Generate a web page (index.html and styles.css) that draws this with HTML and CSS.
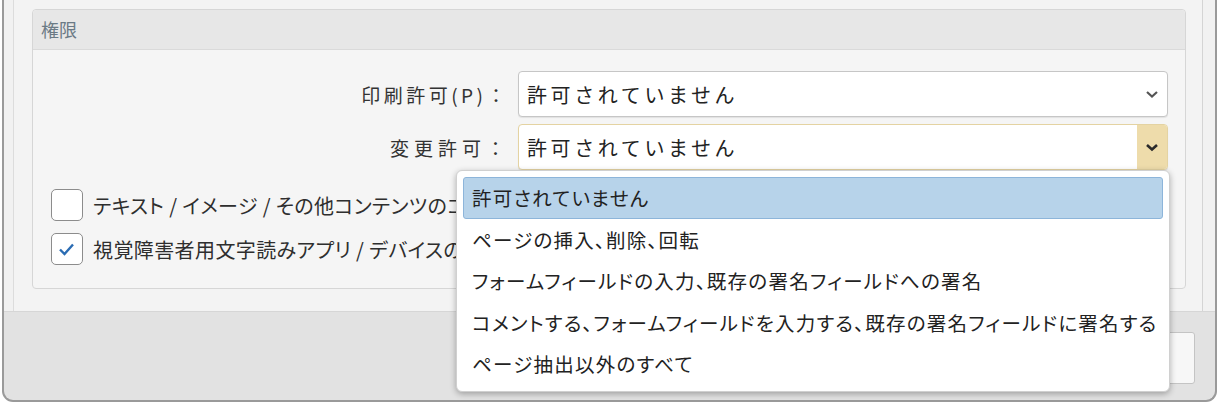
FILE: index.html
```html
<!DOCTYPE html>
<html lang="ja">
<head>
    <meta charset="UTF-8">
    <title>セキュリティ設定</title>
    <link rel="stylesheet" href="styles.css">
</head>
<body>

    <div class="ventana">
        <div class="principal">
            <div class="contenido">
                <div class="grupo">
                    <div class="grupo-titulo">権限</div>
                    <div class="grupo-cuerpo">
                        <div class="filas">
                            <div class="etiqueta">印刷許可(P)：</div>
                            <div class="selector">
                                <span class="valor">許可されていません</span>
                                <span class="flecha">
                                    <svg width="14" height="9" viewBox="0 0 14 9"><path d="M2 2 L7 6.5 L12 2" fill="none" stroke="#555" stroke-width="2.2"/></svg>
                                </span>
                            </div>
                            <div class="etiqueta etiqueta-ancha">変更許可：</div>
                            <div class="selector activo">
                                <span class="valor">許可されていません</span>
                                <span class="flecha">
                                    <svg width="14" height="9" viewBox="0 0 14 9"><path d="M2 2 L7 6.5 L12 2" fill="none" stroke="#2a2a2a" stroke-width="2.6"/></svg>
                                </span>
                            </div>
                        </div>

                        <label class="opcion">
                            <span class="casilla"></span>
                            <span class="texto">テキスト / イメージ / その他コンテンツのコピーを有効にする</span>
                        </label>
                        <label class="opcion">
                            <span class="casilla">
                                <svg width="30" height="30" viewBox="0 0 30 30"><path d="M8 15.5 L12.5 20 L21 10.5" fill="none" stroke="#2b6cb3" stroke-width="2.4"/></svg>
                            </span>
                            <span class="texto">視覚障害者用文字読みアプリ / デバイスのテキストアクセスを有効にする</span>
                        </label>
                    </div>
                </div>
            </div>
        </div>
        <div class="pie">
            <button class="boton">OK</button>
        </div>
    </div>

    <ul class="lista">
        <li class="marcado">許可されていません</li>
        <li>ページの挿入、削除、回転</li>
        <li>フォームフィールドの入力、既存の署名フィールドへの署名</li>
        <li>コメントする、フォームフィールドを入力する、既存の署名フィールドに署名する</li>
        <li>ページ抽出以外のすべて</li>
    </ul>

</body>
</html>
```

FILE: styles.css
```css
body {
    margin: 0;
    background-color: #ffffff;
    font-family: "Noto Sans CJK JP", "Noto Sans", sans-serif;
    color: #2b2b2b;
}
.ventana {
    margin-left: 2px;
    width: 1211px;
    height: 400px;
    border: 2px solid #9a9a9a;
    border-top: none;
    border-radius: 0 0 11px 11px;
    background-color: #e2e2e2;
    display: flex;
    flex-direction: column;
    overflow: hidden;
}
.principal {
    height: 311px;
    background-color: #f1f1f1;
    padding: 0 12px 0 9px;
    border-bottom: 1px solid #d6d6d6;
}
.contenido {
    height: 100%;
    background-color: #f3f3f3;
    border-left: 1px solid #dcdcdc;
    border-right: 1px solid #d4d4d4;
    padding: 9px 16px 0 18px;
    box-sizing: border-box;
}
.grupo {
    height: 280px;
    border: 1px solid #d6d6d6;
    border-radius: 4px;
    background-color: #f5f5f5;
    box-sizing: border-box;
}
.grupo-titulo {
    height: 39px;
    line-height: 38px;
    padding-left: 8px;
    background-color: #e7e7e7;
    border-bottom: 1px solid #dadada;
    border-radius: 4px 4px 0 0;
    font-size: 18px;
    color: #6b7a85;
}
.grupo-cuerpo {
    padding: 21px 17px 0 18px;
}
.filas {
    display: grid;
    grid-template-columns: 1fr 650px;
    column-gap: 12px;
    row-gap: 7px;
    align-items: center;
}
.etiqueta {
    text-align: right;
    font-size: 19px;
    letter-spacing: 3.5px;
    margin-right: -3px;
    color: #333;
}
.etiqueta-ancha {
    letter-spacing: 5px;
    margin-right: -4px;
}
.selector {
    height: 46px;
    box-sizing: border-box;
    border: 1px solid #c6c6c6;
    border-radius: 4px;
    background-color: #ffffff;
    box-shadow: 0 1px 1px rgba(0, 0, 0, 0.08);
    display: flex;
    align-items: center;
    justify-content: space-between;
}
.valor {
    padding-left: 8px;
    font-size: 20px;
    letter-spacing: 3.6px;
    color: #222;
}
.flecha {
    width: 30px;
    height: 100%;
    display: flex;
    align-items: center;
    justify-content: center;
}
.activo {
    border-color: #e4d3a2;
}
.activo .flecha {
    background-color: #eedcab;
    border-radius: 0 3px 3px 0;
}
.opcion {
    display: flex;
    align-items: center;
    gap: 10px;
    font-size: 20px;
    font-feature-settings: "palt";
    color: #2e2e2e;
    white-space: nowrap;
}
.opcion:first-of-type {
    margin-top: 19px;
}
.opcion + .opcion {
    margin-top: 12px;
}
.texto {
    width: 363px;
    overflow: hidden;
    letter-spacing: 0.4px;
}
.casilla {
    width: 32px;
    height: 32px;
    flex-shrink: 0;
    box-sizing: border-box;
    border: 1px solid #8c8c8c;
    border-radius: 5px;
    background-color: #ffffff;
    display: flex;
    align-items: center;
    justify-content: center;
}
.pie {
    flex: 1;
    display: flex;
    justify-content: flex-end;
    align-items: flex-start;
    padding: 20px 20px 0 0;
}
.boton {
    width: 140px;
    height: 52px;
    background-color: #f7f7f7;
    border: 1px solid #c4c4c4;
    border-radius: 3px;
    font-family: inherit;
    font-size: 18px;
}
.lista {
    position: absolute;
    left: 456px;
    top: 170px;
    width: 714px;
    height: 222px;
    box-sizing: border-box;
    margin: 0;
    padding: 6px 6px;
    list-style: none;
    background-color: #ffffff;
    border: 1px solid #d0d0d0;
    border-radius: 6px;
    box-shadow: 0 2px 6px rgba(0, 0, 0, 0.3);
}
.lista li {
    height: 41.5px;
    line-height: 40px;
    padding-left: 8px;
    box-sizing: border-box;
    border: 1px solid transparent;
    border-radius: 3px;
    font-size: 19.5px;
    font-feature-settings: "palt";
    letter-spacing: 1.25px;
    color: #222;
    white-space: nowrap;
}
.lista li.marcado {
    background-color: #b7d3ea;
    border-color: #8db5da;
}
```
